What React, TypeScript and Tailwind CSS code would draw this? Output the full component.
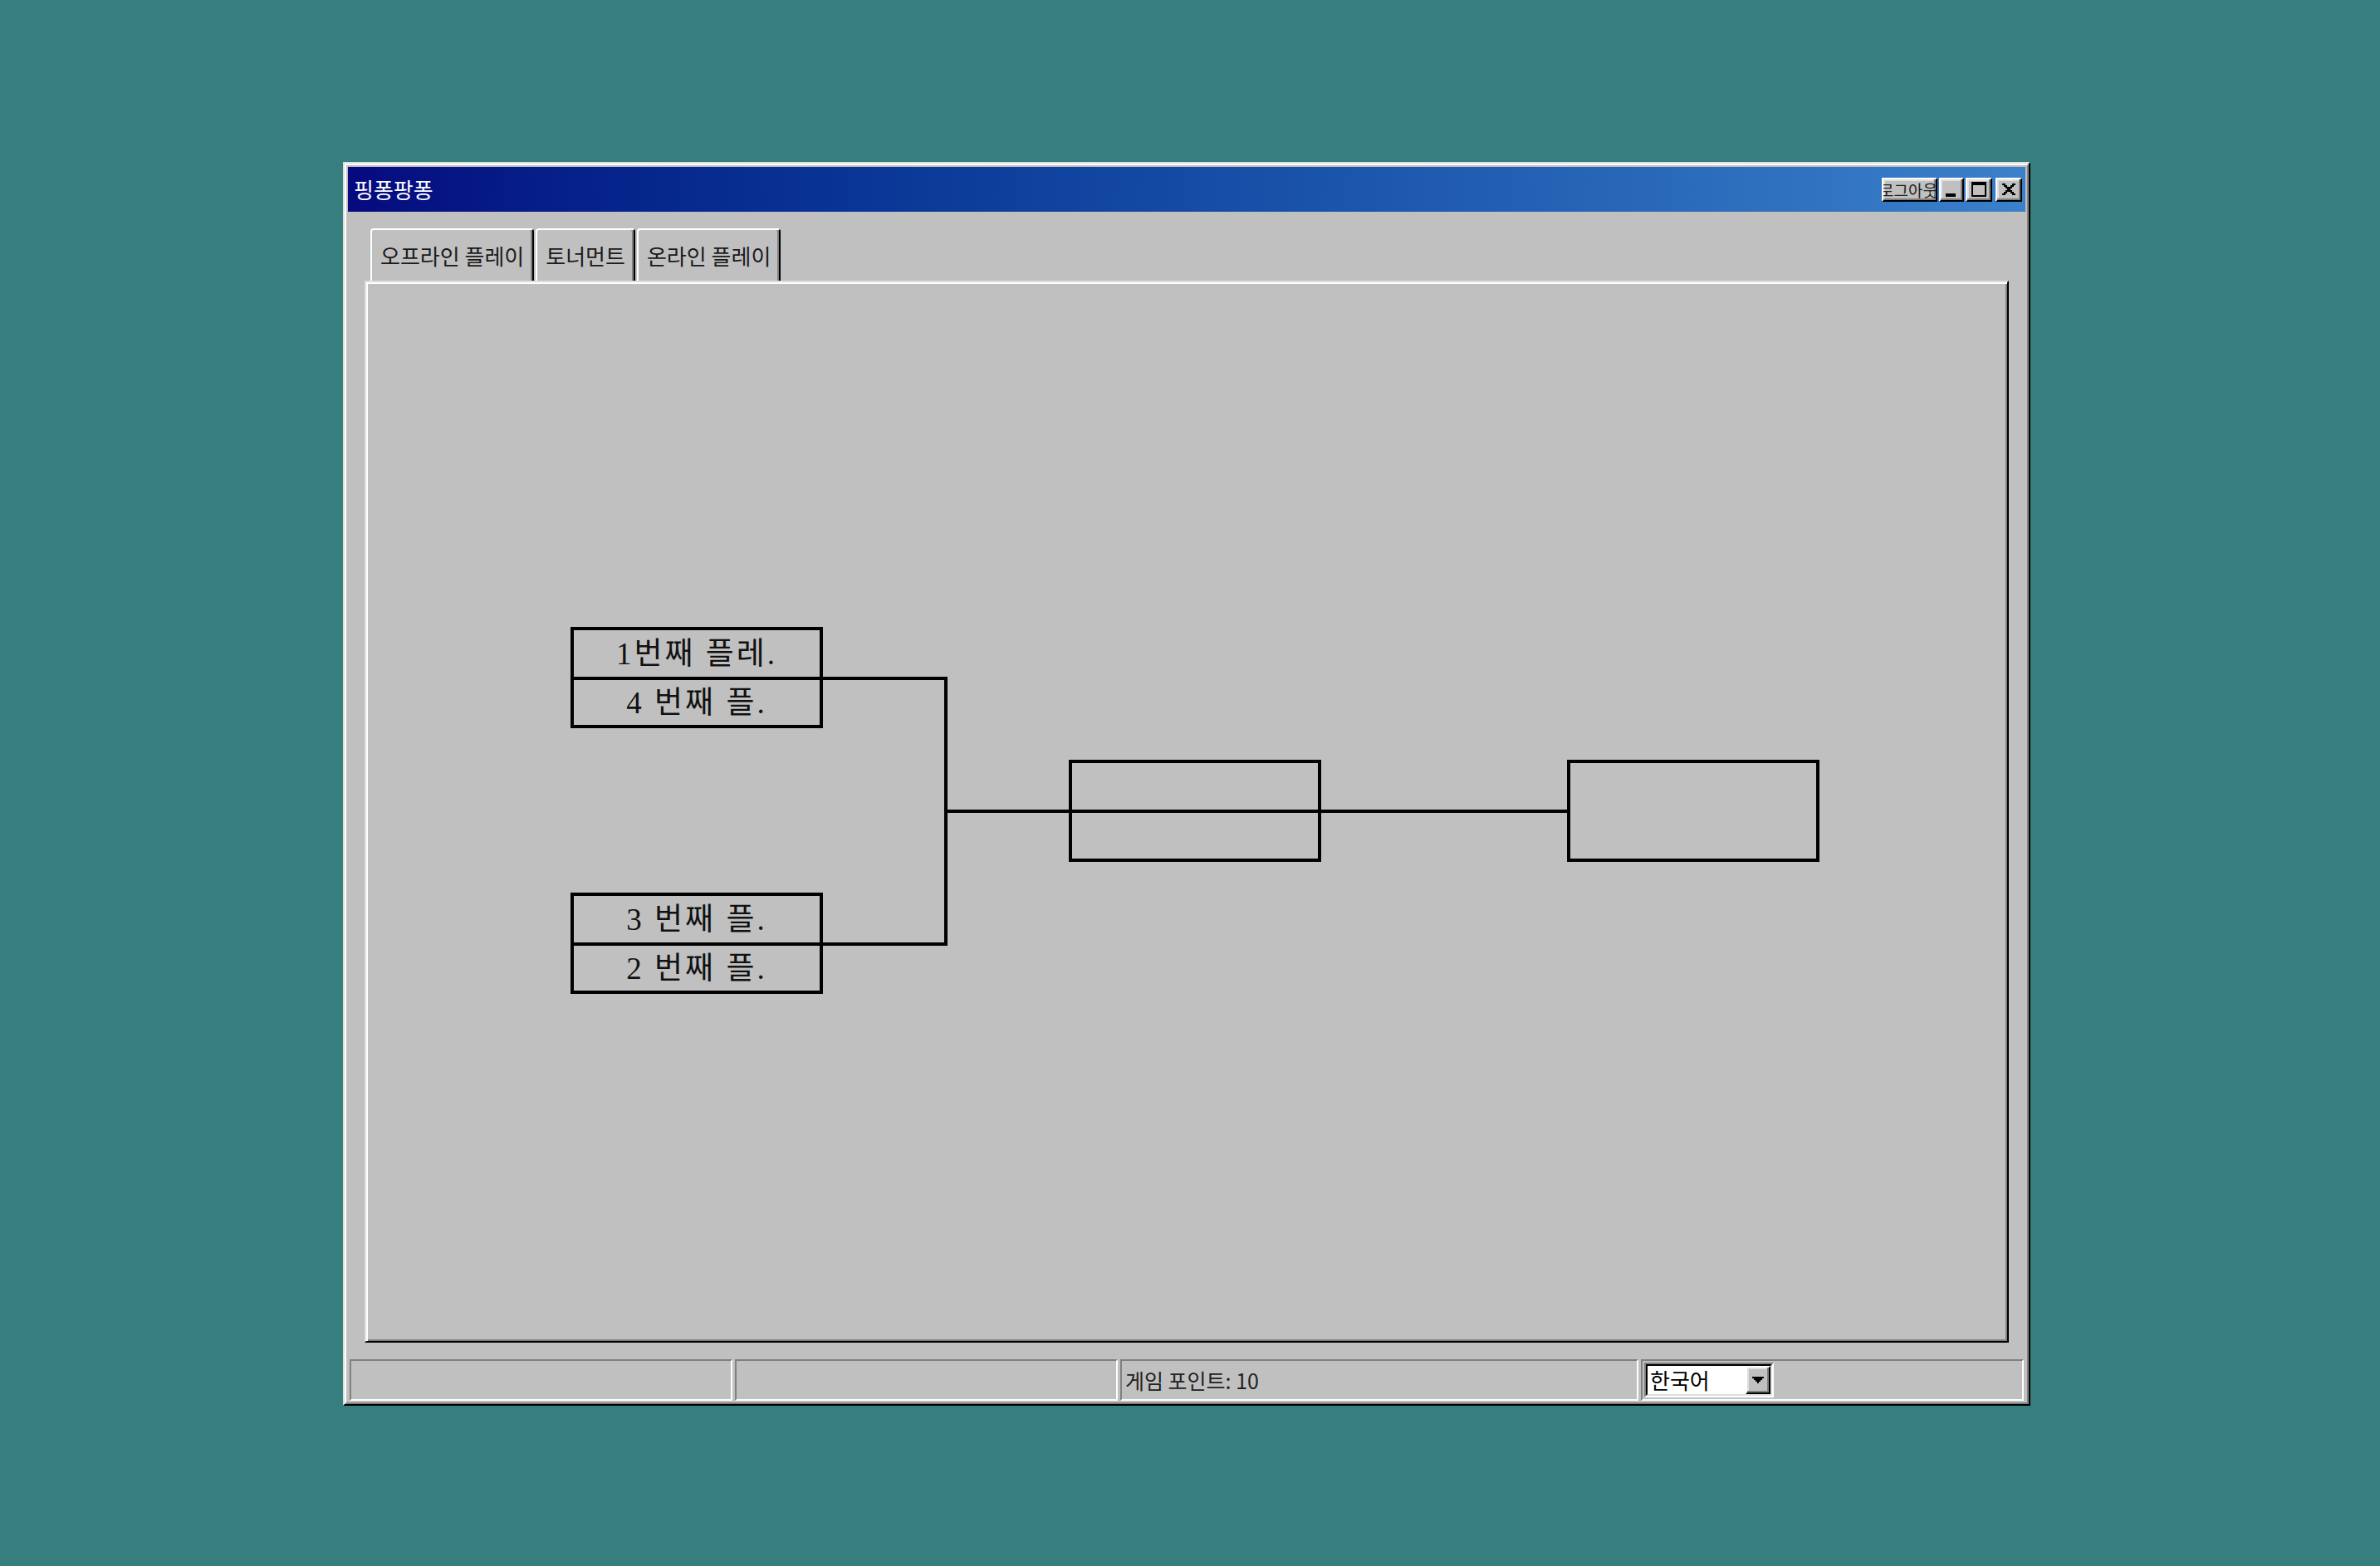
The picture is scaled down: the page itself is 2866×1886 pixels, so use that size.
import React from "react";

const FONT = { fontFamily: '"Noto Sans CJK KR", "Noto Sans", sans-serif' };
const SERIF = { fontFamily: '"Liberation Serif", "Noto Sans CJK KR", serif' };

function CloseGlyph() {
  const rows = ["11000011", "01100110", "00111100", "00011000", "00111100", "01100110", "11000011"];
  return (
    <svg width="16" height="14" viewBox="0 0 8 7" shapeRendering="crispEdges">
      {rows.map((r, y) =>
        r.split("").map((c, x) => (c === "1" ? <rect key={`${x}-${y}`} x={x} y={y} width="1" height="1" fill="#000" /> : null))
      )}
    </svg>
  );
}

function MaxGlyph() {
  return (
    <svg width="18" height="18" viewBox="0 0 9 9" shapeRendering="crispEdges">
      <rect x="0" y="0" width="9" height="2" fill="#000" />
      <rect x="0" y="0" width="1" height="9" fill="#000" />
      <rect x="8" y="0" width="1" height="9" fill="#000" />
      <rect x="0" y="8" width="9" height="1" fill="#000" />
    </svg>
  );
}

function DownGlyph() {
  return (
    <svg width="14" height="8" viewBox="0 0 7 4" shapeRendering="crispEdges">
      <rect x="0" y="0" width="7" height="1" fill="#000" />
      <rect x="1" y="1" width="5" height="1" fill="#000" />
      <rect x="2" y="2" width="3" height="1" fill="#000" />
      <rect x="3" y="3" width="1" height="1" fill="#000" />
    </svg>
  );
}

// raised win98 button frame
const raised =
  "bg-[#c0c0c0] border-2 border-t-white border-l-white border-r-black border-b-black shadow-[inset_-2px_-2px_0_#808080,inset_2px_2px_0_#dfdfdf]";

function MatchBox({ top, left, rows, height = 122 }: { top: number; left: number; rows?: [string, string]; height?: number }) {
  return (
    <div
      className="absolute w-[304px] border-4 border-black flex flex-col"
      style={{ top, left, height }}
    >
      {rows && (
        <>
          <div className="h-[56px] flex items-center justify-center text-[37px] tracking-[3px] leading-none text-[#111]" style={SERIF}>
            {rows[0]}
          </div>
          <div className="h-[4px] bg-black" />
          <div className="flex-1 flex items-center justify-center text-[37px] tracking-[3px] leading-none text-[#111]" style={SERIF}>
            {rows[1]}
          </div>
        </>
      )}
    </div>
  );
}

export default function App() {
  const tabs = ["오프라인 플레이", "토너먼트", "온라인 플레이"];

  return (
    <div className="w-full h-[1886px] bg-[#377f7e] pt-[195px] pl-[413px]" style={FONT}>
      {/* Window */}
      <div className="w-[2032px] h-[1498px] bg-[#c0c0c0] border-2 border-t-[#dfdfdf] border-l-[#dfdfdf] border-r-black border-b-black">
        <div className="h-full border-2 border-t-white border-l-white border-r-[#808080] border-b-[#808080] p-[2px] flex flex-col">
          {/* Title bar */}
          <div className="h-[54px] flex items-center justify-between bg-linear-to-r from-[#07097f] to-[#3b80ca] pl-[7px] pr-[4px]">
            <span className="text-white text-[26px] leading-none">핑퐁팡퐁</span>
            <div className="flex items-center">
              <button className={`${raised} w-[67px] h-[29px] overflow-hidden flex items-center justify-end text-[19px] leading-none text-[#222] whitespace-nowrap`}>
                <span className="-mr-[2px]">로그아웃</span>
              </button>
              <button className={`${raised} ml-[2px] w-[30px] h-[29px] flex items-end justify-start pl-[6px] pb-[4px]`}>
                <div className="w-[12px] h-[4px] bg-black" />
              </button>
              <button className={`${raised} ml-[2px] w-[32px] h-[29px] flex items-center justify-center`}>
                <MaxGlyph />
              </button>
              <button className={`${raised} ml-[4px] w-[32px] h-[29px] flex items-center justify-center`}>
                <CloseGlyph />
              </button>
            </div>
          </div>

          {/* Tabs + panel */}
          <div className="mt-[20px] px-[20px]">
            <div className="flex items-end h-[63px] pl-[7px]">
              {tabs.map((t, i) => (
                <div
                  key={t}
                  className={`h-[63px] px-[10px] flex items-center border-t-2 border-l-2 border-r-2 border-t-white border-l-white border-r-black rounded-t-[4px] shadow-[inset_-2px_0_0_#808080] text-[26px] leading-none text-[#1a1a1a] whitespace-nowrap ${i > 0 ? "ml-[2px]" : ""}`}
                >
                  {t}
                </div>
              ))}
            </div>
            <div className="relative h-[1279px] border-2 border-t-[#dfdfdf] border-l-[#dfdfdf] border-r-black border-b-black shadow-[inset_2px_2px_0_#fff,inset_-2px_-2px_0_#808080]">
              {/* tournament bracket */}
              <MatchBox top={415} left={246} rows={["1번째 플레.", "4 번째 플."]} />
              <MatchBox top={735} left={246} rows={["3 번째 플.", "2 번째 플."]} />
              <MatchBox top={575} left={846} height={123} />
              <MatchBox top={575} left={1446} height={123} />
              <div className="absolute top-[475px] left-[550px] w-[150px] h-[4px] bg-black" />
              <div className="absolute top-[795px] left-[550px] w-[150px] h-[4px] bg-black" />
              <div className="absolute top-[475px] left-[696px] w-[4px] h-[324px] bg-black" />
              <div className="absolute top-[635px] left-[696px] w-[750px] h-[4px] bg-black" />
            </div>
          </div>

          {/* Status bar */}
          <div className="mt-[20px] h-[50px] flex gap-[3px] px-[2px]">
            <div className="w-[461px] h-full border-2 border-t-[#808080] border-l-[#808080] border-r-white border-b-white" />
            <div className="w-[461px] h-full border-2 border-t-[#808080] border-l-[#808080] border-r-white border-b-white" />
            <div className="w-[624px] h-full border-2 border-t-[#808080] border-l-[#808080] border-r-white border-b-white flex items-center pl-[4px] text-[25px] leading-none text-[#222]">
              게임 포인트: 10
            </div>
            <div className="flex-1 h-full border-2 border-t-[#808080] border-l-[#808080] border-r-white border-b-white pl-[2px] pt-[2px]">
              <div className="w-[156px] h-[42px] border-2 border-t-[#808080] border-l-[#808080] border-r-white border-b-white">
                <div className="h-full border-2 border-t-black border-l-black border-r-[#dfdfdf] border-b-[#dfdfdf] bg-white flex items-center">
                  <span className="flex-1 pl-[3px] text-[26px] leading-none text-black">한국어</span>
                  <div className={`${raised} w-[30px] h-full flex items-center justify-center`}>
                    <DownGlyph />
                  </div>
                </div>
              </div>
            </div>
          </div>
        </div>
      </div>
    </div>
  );
}
